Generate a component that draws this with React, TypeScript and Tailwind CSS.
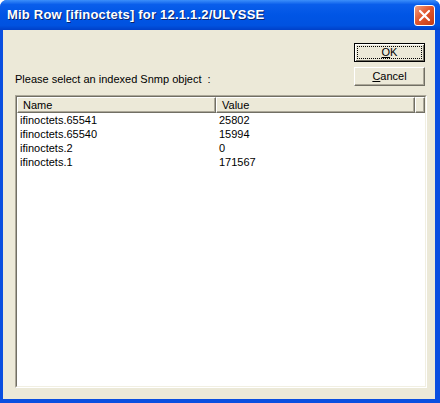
import React from 'react';

const rows = [
  { name: 'ifinoctets.65541', value: '25802' },
  { name: 'ifinoctets.65540', value: '15994' },
  { name: 'ifinoctets.2', value: '0' },
  { name: 'ifinoctets.1', value: '171567' },
];

function CloseButton() {
  return (
    <div className="w-[21px] h-[21px] rounded-[3px] border border-white bg-[linear-gradient(135deg,#F0A083_0%,#E2582E_45%,#C43A14_100%)] flex items-center justify-center">
      <svg width="13" height="13" viewBox="0 0 13 13">
        <path d="M2 2 L11 11 M11 2 L2 11" stroke="#fff" strokeWidth="2.2" strokeLinecap="round" />
      </svg>
    </div>
  );
}

export default function App() {
  return (
    <div className="w-[440px] h-[403px] bg-[#0A4FE0] rounded-t-[7px] flex flex-col overflow-hidden font-['Liberation_Sans',Arial,sans-serif]">
      {/* title bar */}
      <div className="h-[30px] shrink-0 flex items-center justify-between pl-[7px] pr-[5px] bg-[linear-gradient(180deg,#3C8FFA_0%,#0A5EEB_15%,#0055E5_50%,#0052E0_85%,#0040C8_100%)]">
        <span className="text-white font-bold text-[13px] tracking-[0.2px] [text-shadow:1px_1px_0_#0A246A]">
          Mib Row [ifinoctets] for 12.1.1.2/ULYSSE
        </span>
        <CloseButton />
      </div>

      {/* client area */}
      <div className="flex-1 ml-[3px] mr-[5px] mb-[4px] bg-[#ECE9D8] flex flex-col pt-[13px] pl-[12px] pr-[8px] pb-[11px] text-[11px] text-black">
        <div className="flex items-end justify-between">
          <span className="leading-[13px]">Please select an indexed Snmp object&nbsp; :</span>
          <div className="flex flex-col gap-[5px] mr-[2px]">
            <div className="w-[71px] h-[19px] border border-black bg-[#ECE9D8] p-[2px] shadow-[inset_1px_1px_0_#fff,inset_-1px_-1px_0_#716F64]">
              <div className="h-full border border-dotted border-black flex items-center justify-center leading-none">
                <span><span className="underline">O</span>K</span>
              </div>
            </div>
            <div className="w-[71px] h-[19px] bg-[#ECE9D8] flex items-center justify-center border-t border-l border-t-white border-l-white border-b border-r border-b-[#716F64] border-r-[#716F64] shadow-[inset_-1px_-1px_0_#ACA899]">
              <span><span className="underline">C</span>ancel</span>
            </div>
          </div>
        </div>

        {/* list view */}
        <div className="mt-[9px] flex-1 border border-t-[#ACA899] border-l-[#ACA899] border-b-white border-r-white">
          <div className="h-full bg-white border border-t-[#716F64] border-l-[#716F64] border-b-[#F1EFE2] border-r-[#F1EFE2] flex flex-col">
            <div className="flex h-[16px] shrink-0">
              <div className="w-[199px] bg-[#ECE9D8] border-t border-l border-t-white border-l-white border-b border-r border-b-[#716F64] border-r-[#716F64] shadow-[inset_-1px_-1px_0_#ACA899] pl-[5px] leading-[14px]">
                Name
              </div>
              <div className="w-[199px] bg-[#ECE9D8] border-t border-l border-t-white border-l-white border-b border-r border-b-[#716F64] border-r-[#716F64] shadow-[inset_-1px_-1px_0_#ACA899] pl-[5px] leading-[14px]">
                Value
              </div>
              <div className="flex-1 bg-[#ECE9D8] border-t border-l border-t-white border-l-white border-b border-r border-b-[#716F64] border-r-[#716F64] shadow-[inset_-1px_-1px_0_#ACA899]" />
            </div>
            {rows.map((r) => (
              <div key={r.name} className="flex h-[14px] leading-[14px]">
                <div className="w-[199px] pl-[3px]">{r.name}</div>
                <div className="w-[199px] pl-[3px]">{r.value}</div>
              </div>
            ))}
          </div>
        </div>
      </div>
    </div>
  );
}
